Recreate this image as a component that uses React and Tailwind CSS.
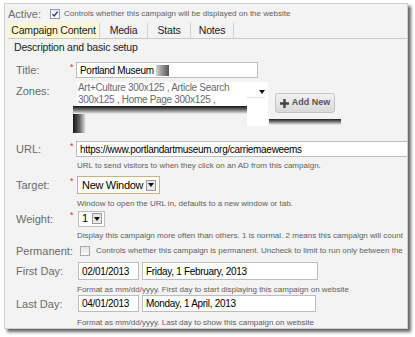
import React from "react";

const font = { fontFamily: '"Liberation Sans", Arial, sans-serif' };

function Label({ text, star }) {
  return (
    <>
      <div className="w-[65px] shrink-0 whitespace-nowrap pl-[11px] text-[11px] leading-[14px] text-[#6b6b6b]">{text}</div>
      <div className="w-[6px] shrink-0 self-start text-[9px] leading-[10px] text-[#e0322b]">{star ? "*" : ""}</div>
    </>
  );
}

function Help({ children }) {
  return (
    <div className="flex h-[10px] items-center whitespace-nowrap pl-[72px] text-[8px] text-[#5f5f5f]">{children}</div>
  );
}

function DropArrow() {
  return (
    <span className="flex h-[11px] w-[10px] shrink-0 items-center justify-center border border-[#9a9a9a] bg-[#e9e9e9]">
      <svg width="6" height="4" viewBox="0 0 6 4">
        <path d="M0 0h6L3 4z" fill="#111" />
      </svg>
    </span>
  );
}

function CheckBox({ checked }) {
  return (
    <span className="flex h-[10px] w-[10px] shrink-0 items-center justify-center border border-[#8e9bb3] bg-gradient-to-b from-[#e8ecf3] to-[#ffffff]">
      {checked && (
        <svg width="8" height="8" viewBox="0 0 8 8">
          <path d="M1.5 4.2L3.2 6L6.6 1.6" stroke="#2b3f82" strokeWidth="1.4" fill="none" />
        </svg>
      )}
    </span>
  );
}

const field = "flex shrink-0 items-center whitespace-nowrap border border-[#bdbdbd] bg-white pl-[3px] text-[10px] tracking-[-0.3px] text-black";

export default function App() {
  return (
    <div className="h-[337px] w-[415px] overflow-hidden bg-white" style={font}>
      <div className="ml-[4px] mt-[3px] h-[326px] w-[404px] overflow-hidden border border-[#cfcfcf] bg-[#f3f3f3] shadow-[3px_3px_3px_rgba(0,0,0,0.6)]">
        {/* Active row */}
        <div className="mt-[2px] flex h-[16px] items-center pl-[3px]">
          <span className="w-[42px] shrink-0 text-[11px] text-[#6b6b6b]">Active:</span>
          <CheckBox checked />
          <span className="ml-[4px] whitespace-nowrap text-[8px] text-[#5f5f5f]">Controls whether this campaign will be displayed on the website</span>
        </div>

        {/* Tabs */}
        <div className="ml-[3px] mt-[1px] flex h-[16px] border-b border-[#c9c9c9] text-[10.5px] tracking-[-0.2px] whitespace-nowrap text-[#222]">
          <div className="flex w-[92px] items-center justify-center border-r border-[#d2d2d2] bg-[#fcf9d4]">Campaign Content</div>
          <div className="flex w-[48px] items-center justify-center border-r border-[#d2d2d2]">Media</div>
          <div className="flex w-[43px] items-center justify-center border-r border-[#d2d2d2]">Stats</div>
          <div className="flex w-[43px] items-center justify-center border-r border-[#d2d2d2]">Notes</div>
        </div>

        <div className="mt-[2px] flex h-[14px] items-center pl-[9px] text-[10.5px] tracking-[-0.2px] text-[#222]">Description and basic setup</div>

        {/* Title */}
        <div className="mt-[7px] flex h-[16px] items-center">
          <Label text="Title:" star />
          <div className={`${field} h-[16px] w-[182px]`}>
            Portland Museum
            <span className="ml-[2px] h-[11px] w-[13px] bg-gradient-to-r from-[#d6d6d6] to-[#555]" />
          </div>
        </div>

        {/* Zones */}
        <div className="mt-[4px] flex h-[55px] items-start">
          <div className="mt-[2px] flex">
            <Label text="Zones:" />
          </div>
          {/* list box, with the broken shadow drawn under it */}
          <div className="ml-[-3px] flex w-[175px] shrink-0 flex-col">
            <div className="ml-[4px] h-[24px] w-[171px] whitespace-nowrap bg-white pl-[1px] text-[10px] leading-[12px] tracking-[-0.3px] text-[#6a6a6a]">
              Art+Culture 300x125 , Article Search<br />300x125 , Home Page 300x125 ,
            </div>
            <div className="h-[8px] w-[175px] bg-gradient-to-b from-[#151515] to-[#f3f3f3]" />
            <div className="h-[19px] w-[13px] bg-gradient-to-r from-[#151515] via-[#666] to-[#f3f3f3]" />
          </div>
          <div className="ml-[-1px] flex h-[44px] w-[21px] shrink-0 flex-col items-end bg-white pr-[3px] pt-[8px]">
            <svg width="6" height="4" viewBox="0 0 6 4">
              <path d="M0 0h6L3 4z" fill="#111" />
            </svg>
            <span className="mt-[3px] h-px w-[18px] bg-[#e2e2e2]" />
          </div>
          <div className="ml-[7px] mt-[11px] flex flex-col">
            <button className="flex h-[20px] w-[60px] items-center justify-center gap-[3px] rounded-[3px] border border-[#c4c4c4] bg-gradient-to-b from-[#f2f2f2] to-[#d9d9d9] text-[9px] font-bold whitespace-nowrap text-[#555]">
              <svg width="9" height="9" viewBox="0 0 9 9">
                <path d="M3.3 0h2.4v3.3H9v2.4H5.7V9H3.3V5.7H0V3.3h3.3z" fill="#444" />
              </svg>
              Add New
            </button>
            <span className="ml-[-6px] mt-[6px] h-[6px] w-[72px] bg-gradient-to-b from-[#222] to-[#f3f3f3]" />
          </div>
        </div>

        {/* URL */}
        <div className="mt-[4px] flex h-[16px] items-center">
          <Label text="URL:" star />
          <div className={`${field} h-[16px] w-[340px] pl-[2px]`}>
            https://www.portlandartmuseum.org/carriemaeweems
          </div>
        </div>
        <div className="mt-[4px]">
          <Help>URL to send visitors to when they click on an AD from this campaign.</Help>
        </div>

        {/* Target */}
        <div className="mt-[5px] flex h-[18px] items-center">
          <Label text="Target:" star />
          <div className="ml-[1px] flex h-[18px] w-[83px] shrink-0 items-center justify-between whitespace-nowrap border-[1.5px] border-[#cdb27a] bg-white pl-[4px] pr-[3px] text-[11px] tracking-[-0.3px] text-black">
            New Window
            <DropArrow />
          </div>
        </div>
        <div className="mt-[5px]">
          <Help>Window to open the URL in, defaults to a new window or tab.</Help>
        </div>

        {/* Weight */}
        <div className="mt-[1px] flex h-[17px] items-center">
          <Label text="Weight:" star />
          <div className="ml-[2px] flex h-[16px] w-[27px] shrink-0 items-center justify-between border border-[#bdbdbd] bg-white pl-[3px] pr-[2px] text-[11px] text-black">
            1
            <DropArrow />
          </div>
        </div>
        <div className="mt-[4px]">
          <Help>Display this campaign more often than others. 1 is normal. 2 means this campaign will count</Help>
        </div>

        {/* Permanent */}
        <div className="mt-[4px] flex h-[12px] items-center">
          <Label text="Permanent:" />
          <span className="ml-[4px] h-[10px] w-[10px] shrink-0 border border-[#a9a9a9] bg-gradient-to-b from-[#e4e4e4] to-[#fafafa]" />
          <span className="ml-[6px] whitespace-nowrap text-[8px] text-[#5f5f5f]">Controls whether this campaign is permanent. Uncheck to limit to run only between the</span>
        </div>

        {/* First Day */}
        <div className="mt-[5px] flex h-[18px] items-center">
          <Label text="First Day:" />
          <div className={`${field} ml-[2px] h-[18px] w-[61px]`}>02/01/2013</div>
          <div className={`${field} ml-[3px] h-[18px] w-[176px]`}>Friday, 1 February, 2013</div>
        </div>
        <div className="mt-[5px]">
          <Help>Format as mm/dd/yyyy. First day to start displaying this campaign on website</Help>
        </div>

        {/* Last Day */}
        <div className="flex h-[17px] items-center">
          <Label text="Last Day:" />
          <div className={`${field} ml-[2px] h-[17px] w-[61px]`}>04/01/2013</div>
          <div className={`${field} ml-[3px] h-[17px] w-[174px]`}>Monday, 1 April, 2013</div>
        </div>
        <div className="mt-[6px]">
          <Help>Format as mm/dd/yyyy. Last day to show this campaign on website</Help>
        </div>
      </div>
    </div>
  );
}
